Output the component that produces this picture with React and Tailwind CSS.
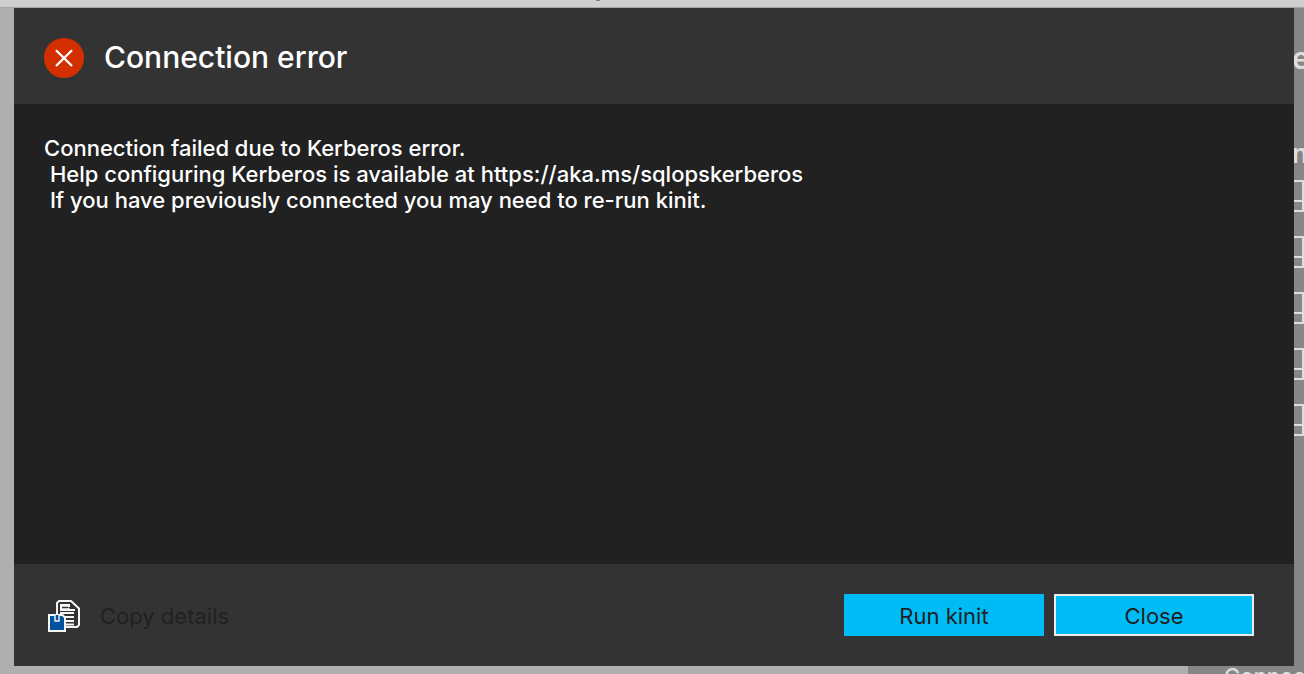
function ErrorIcon() {
  return (
    <svg viewBox="0 0 40 40" className="size-10 shrink-0" aria-hidden="true">
      <circle cx="20" cy="20" r="20" fill="#d32f00" />
      <path d="M12 12.2 28 28M28 12.2 12 28" stroke="#fff" strokeWidth="2.3" fill="none" />
    </svg>
  );
}

function CopyIcon() {
  return (
    <svg viewBox="0 0 32 32" className="size-8 shrink-0" aria-hidden="true">
      <path d="M11 1h12l8 7.5V25l-2 2H11l-2-2V3z" fill="#333" stroke="#f6f6f6" strokeWidth="2" strokeLinejoin="round" />
      <path d="M12 4h10v5h5v2H12z" fill="#f6f6f6" />
      <path d="M14 7.5h6" stroke="#333" strokeWidth="1.5" />
      <path d="M20 7h7v2h-5" fill="#333" />
      <path d="M12 13h14M12 17h14M12 21h14M12 24.5h14" stroke="#f6f6f6" strokeWidth="2" />
      <path d="M1 15h13.5l2.5 2.5V31H1z" fill="#00539c" stroke="#f6f6f6" strokeWidth="2" />
      <path d="M7 15v6h4v-6" fill="#00539c" stroke="#f6f6f6" strokeWidth="1.4" />
    </svg>
  );
}

const fields = [1, 2, 3, 4, 5];

function Backdrop() {
  return (
    <div aria-hidden="true" className="absolute inset-0 flex flex-col overflow-hidden bg-[#afafaf]">
      <div className="h-2 shrink-0 border-b border-[#a5a5a5] bg-[#cfcfcf]">
        <div className="mx-auto h-px w-28">
          <div className="h-px w-1 bg-[#777b82]" />
        </div>
      </div>
      <div className="flex grow justify-end">
        <div className="flex w-29 flex-col bg-[#868686] pt-8 text-[#dedede]">
          <div className="flex h-24 flex-col items-end text-3xl font-semibold leading-9">
            <span className="w-3">e</span>
          </div>
          <div className="flex h-11 flex-col items-end text-[26px] font-semibold leading-9">
            <span className="w-3">n</span>
          </div>
          <div className="flex flex-col gap-6">
            {fields.map((id) => (
              <div key={id} className="h-8 border-2 border-[#dedede] pt-[18px]">
                <div className="h-0.5 bg-[#dedede]" />
              </div>
            ))}
          </div>
          <div className="mt-auto h-2.5 whitespace-nowrap pl-9 text-[22px] font-medium leading-6">
            Connect
          </div>
        </div>
      </div>
    </div>
  );
}

export default function App() {
  return (
    <div className="relative flex h-screen flex-col overflow-hidden pt-2 pr-2.5 pb-2 pl-3.5 font-['Inter',sans-serif]">
      <Backdrop />
      <section
        role="dialog"
        aria-labelledby="dialog-title"
        className="relative flex grow flex-col bg-[#212121] text-white"
      >
        <header className="flex h-24 shrink-0 items-center gap-5 bg-[#333] px-[30px] pt-1">
          <ErrorIcon />
          <h1 id="dialog-title" className="pb-0.5 text-[30px] font-medium leading-9">Connection error</h1>
        </header>
        <p className="grow whitespace-pre-wrap px-[30px] pt-[31px] text-[22px] font-medium leading-[26px]">
          {"Connection failed due to Kerberos error.\n Help configuring Kerberos is available at https://aka.ms/sqlopskerberos\n If you have previously connected you may need to re-run kinit."}
        </p>
        <footer className="flex h-[102px] shrink-0 items-center justify-between bg-[#333] pr-10 pl-[34px] text-[22px] text-[#212121]">
          <button type="button" className="flex items-center gap-5 pt-0.5">
            <CopyIcon />
            <span>Copy details</span>
          </button>
          <div className="flex gap-2.5">
            <button type="button" className="h-[42px] w-[200px] bg-[#00bcf6] pt-0.5">Run kinit</button>
            <button type="button" className="h-[42px] w-[200px] border-2 border-[#ececec] bg-[#00bcf6] pt-0.5">Close</button>
          </div>
        </footer>
      </section>
    </div>
  );
}
